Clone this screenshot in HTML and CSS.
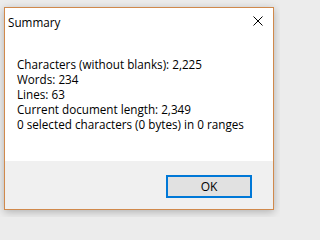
FILE: index.html
```html
<!DOCTYPE html>
<html>
<head>
<meta charset="utf-8">
<link rel="stylesheet" href="styles.css">
</head>
<body>
<div class="window">
  <div class="titlebar">
    <span class="title">Summary</span>
    <span class="close">
      <svg width="10" height="10" viewBox="0 0 10 10"><path d="M0.5 0.5 L9.5 9.5 M9.5 0.5 L0.5 9.5" stroke="#000" stroke-width="1" fill="none"/></svg>
    </span>
  </div>
  <div class="content">
    <div class="line">Characters (without blanks): 2,225</div>
    <div class="line">Words: 234</div>
    <div class="line">Lines: 63</div>
    <div class="line">Current document length: 2,349</div>
    <div class="line">0 selected characters (0 bytes) in 0 ranges</div>
  </div>
  <div class="footer">
    <button class="ok">OK</button>
  </div>
</div>
</body>
</html>
```
FILE: styles.css
```css
html, body {
  margin: 0;
  padding: 0;
}
body {
  width: 280px;
  height: 217px;
  background: #ececec;
  font-family: "Open Sans", "Noto Sans", sans-serif;
  font-size: 11.7px;
  color: #000;
  overflow: hidden;
}
.window {
  margin: 7px 0 0 4px;
  width: 268px;
  height: 201px;
  border: 1px solid #d0894c;
  background: #fff;
  display: flex;
  flex-direction: column;
  box-shadow: 0 2px 8px rgba(0,0,0,0.25);
}
.titlebar {
  height: 30px;
  display: flex;
  align-items: center;
  justify-content: space-between;
  padding: 0 10px 0 3px;
}
.title {
  margin-top: -3px;
}
.close {
  display: flex;
  width: 10px;
  height: 10px;
  margin-top: -4px;
}
.content {
  flex: 1;
  padding: 19px 0 0 12px;
}
.line {
  line-height: 15px;
  white-space: nowrap;
}
.footer {
  height: 48px;
  background: #f0f0f0;
  display: flex;
  justify-content: flex-end;
  align-items: flex-start;
  padding: 14px 21px 0 0;
  box-sizing: border-box;
}
.ok {
  width: 86px;
  height: 23px;
  border: 2px solid #0078d7;
  background: #e1e1e1;
  font-family: inherit;
  font-size: 12px;
  color: #000;
  padding: 0;
  margin: 0;
}
```
